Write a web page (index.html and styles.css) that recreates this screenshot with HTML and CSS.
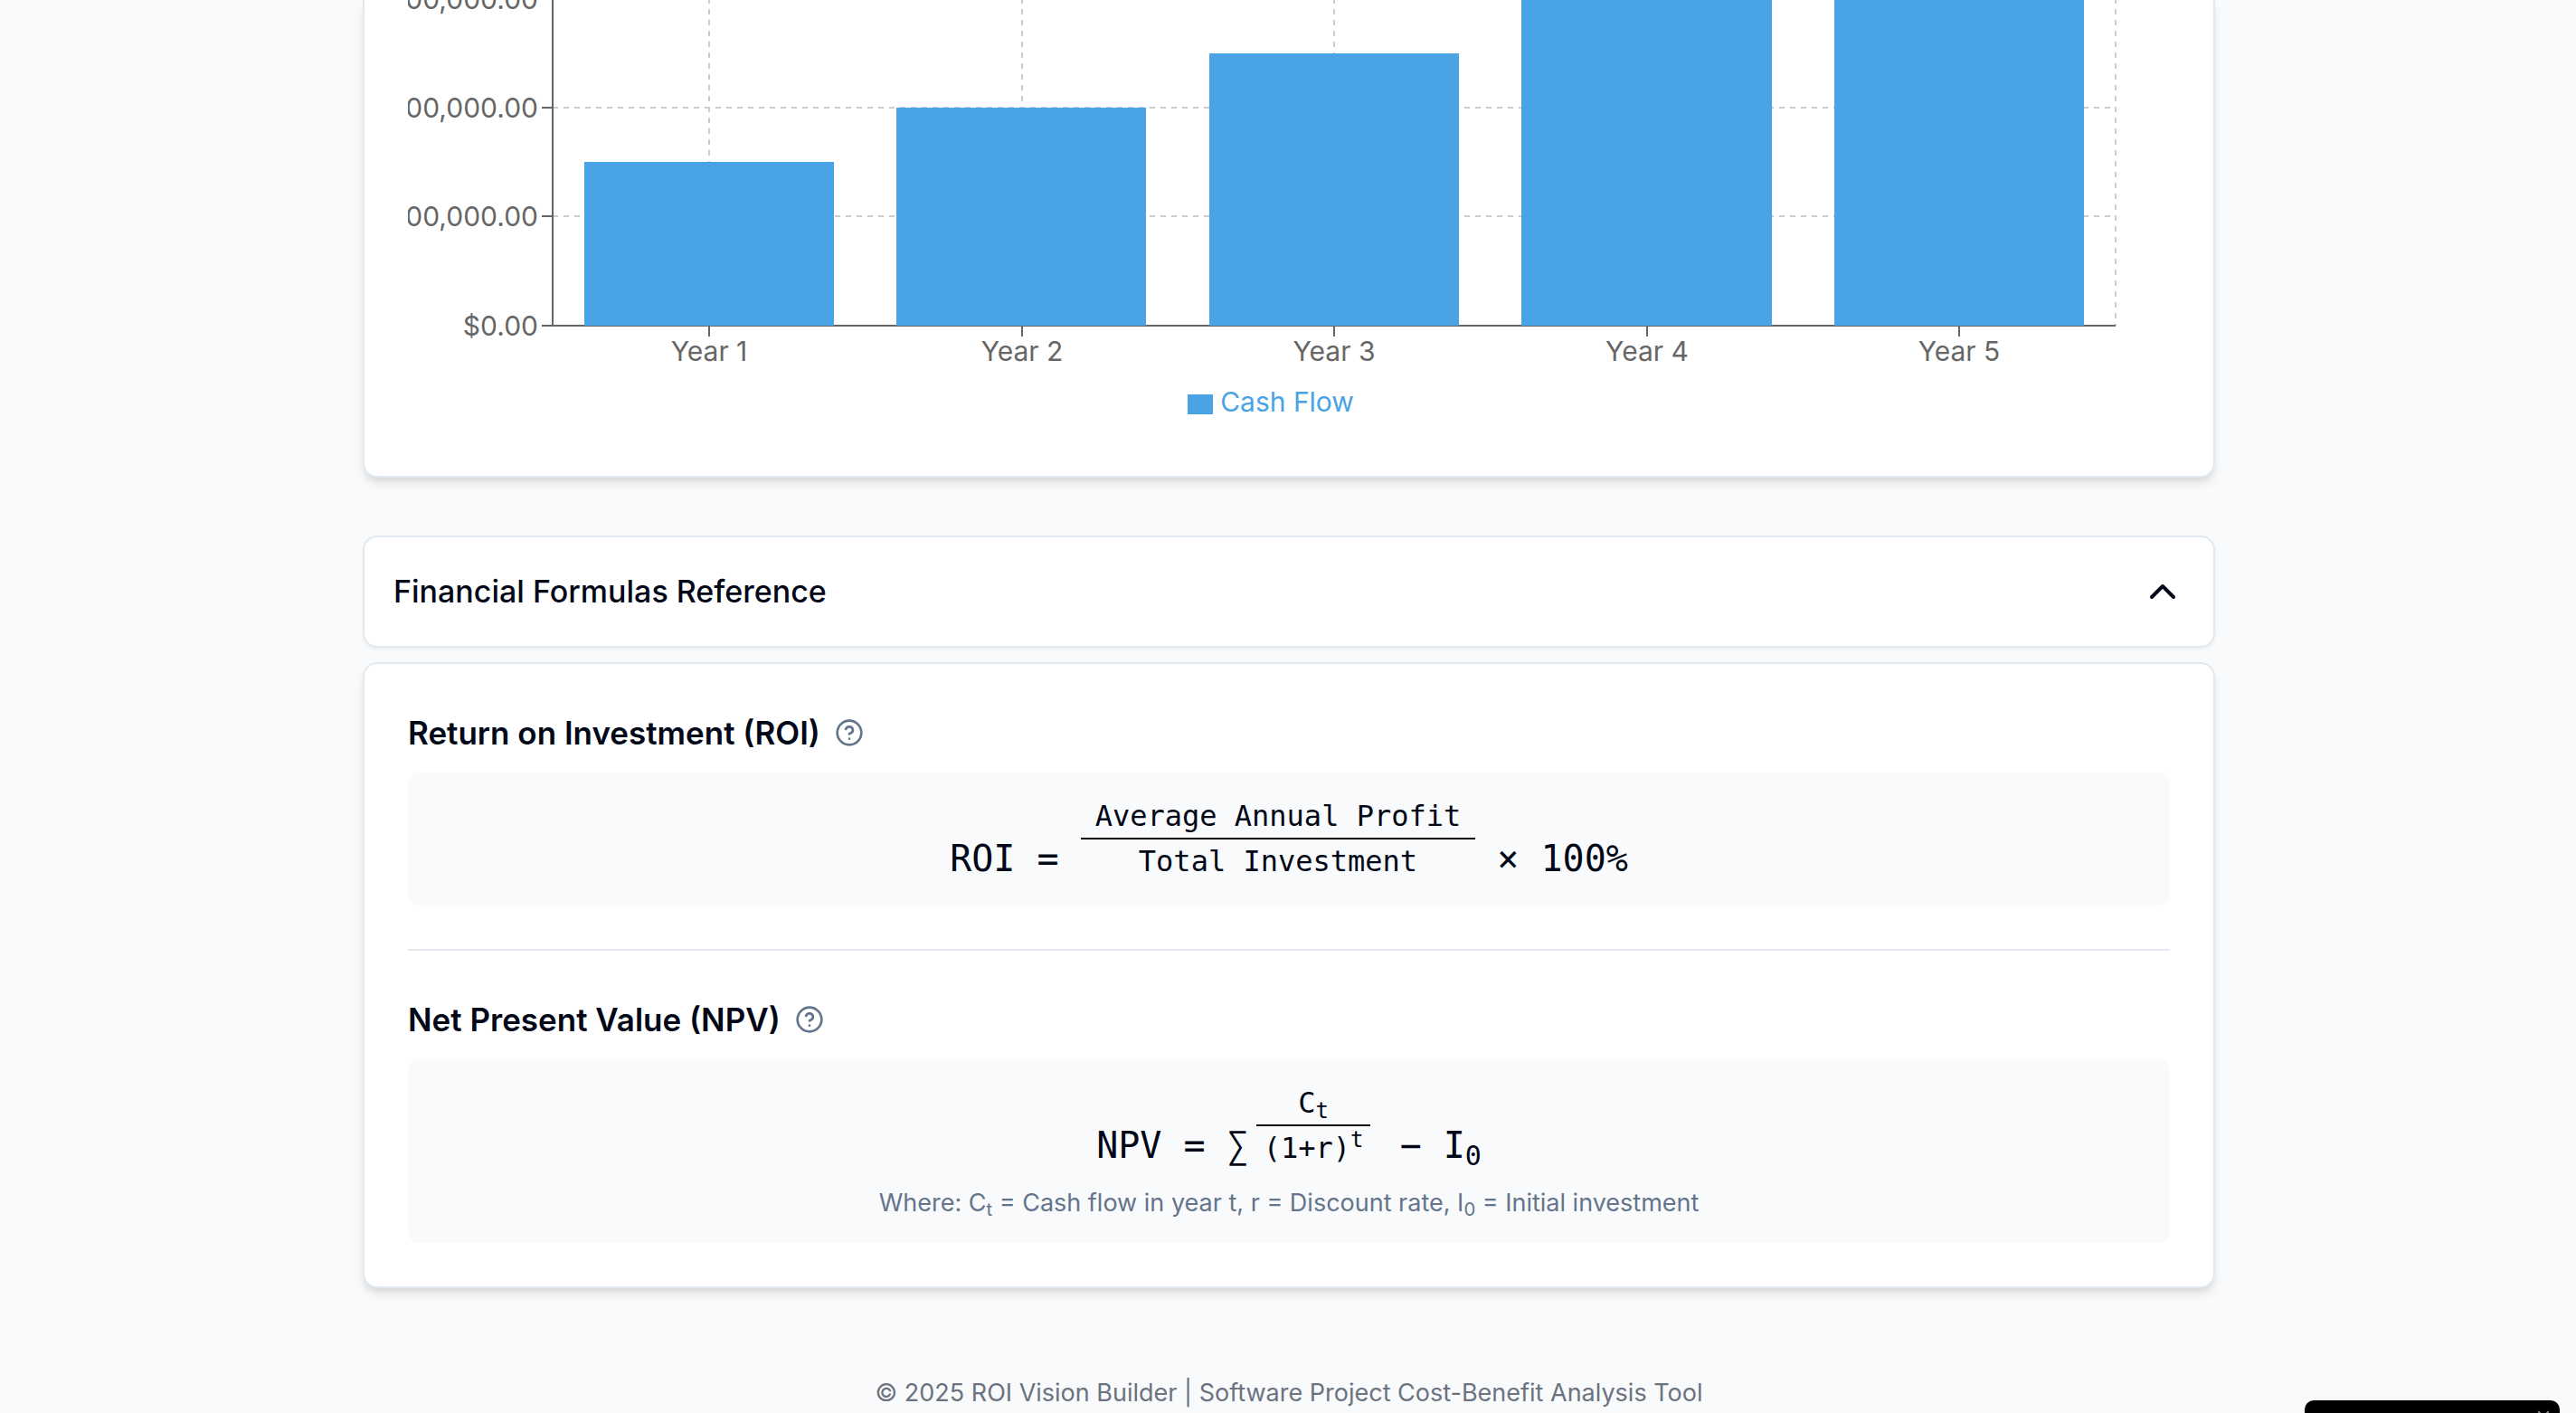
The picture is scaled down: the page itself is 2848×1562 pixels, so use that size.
FILE: index.html
```html
<!DOCTYPE html>
<html lang="en">
<head>
<meta charset="utf-8">
<title>ROI Vision Builder</title>
<link rel="stylesheet" href="styles.css">
</head>
<body>
<main class="page">
  <section class="card chart-card" aria-label="Cash flow by year">
    <svg class="chart" viewBox="0 0 1948 424" role="img" aria-label="Cash flow bar chart">
      <g class="grid">
        <path d="M160 119H1888M160 239H1888"/>
        <path d="M333 -2V360M679 -2V360M1024 -2V360M1370 -2V360M1715 -2V360M1888 -2V360"/>
      </g>
      <g class="axis">
        <path d="M160 0V360M148 360H1888M148 119H160M148 239H160"/>
        <path d="M333 360v12M679 360v12M1024 360v12M1370 360v12M1715 360v12"/>
      </g>
      <g class="bars">
        <rect x="195" y="179" width="276" height="181"/>
        <rect x="540" y="119" width="276" height="241"/>
        <rect x="886" y="59" width="276" height="301"/>
        <rect x="1231" y="0" width="277" height="360"/>
        <rect x="1577" y="0" width="276" height="360"/>
      </g>
      <g class="ticks ticks-y">
        <text x="144" y="10">$300,000.00</text>
        <text x="144" y="130">$200,000.00</text>
        <text x="144" y="250">$100,000.00</text>
        <text x="144" y="371">$0.00</text>
      </g>
      <g class="ticks ticks-x">
        <text x="333" y="399">Year 1</text>
        <text x="679" y="399">Year 2</text>
        <text x="1024" y="399">Year 3</text>
        <text x="1370" y="399">Year 4</text>
        <text x="1715" y="399">Year 5</text>
      </g>
    </svg>
    <div class="legend"><span class="swatch"></span>Cash Flow</div>
  </section>

  <button class="card toggle" type="button" aria-expanded="true" aria-controls="formulas">
    Financial Formulas Reference
    <svg class="chevron" viewBox="0 0 24 24" aria-hidden="true"><path d="m18 15-6-6-6 6"/></svg>
  </button>

  <section class="card formulas" id="formulas">
    <article class="entry">
      <div class="entry-head">
        <h3>Return on Investment (ROI)</h3>
        <button class="help" type="button" aria-label="About ROI"><svg viewBox="0 0 24 24" aria-hidden="true"><circle cx="12" cy="12" r="10"/><path d="M9.090 9a3 3 0 0 1 5.830 1c0 2-3 3-3 3M12 17h.010"/></svg></button>
      </div>
      <div class="formula-box">
        <div class="formula">ROI = <span class="fraction fraction-wide"><span class="top">Average Annual Profit</span><span class="bottom">Total Investment</span></span> × 100%</div>
      </div>
    </article>
    <hr class="rule">
    <article class="entry">
      <div class="entry-head">
        <h3>Net Present Value (NPV)</h3>
        <button class="help" type="button" aria-label="About NPV"><svg viewBox="0 0 24 24" aria-hidden="true"><circle cx="12" cy="12" r="10"/><path d="M9.090 9a3 3 0 0 1 5.830 1c0 2-3 3-3 3M12 17h.010"/></svg></button>
      </div>
      <div class="formula-box">
        <div class="formula">NPV = ∑<span class="fraction fraction-term"><span class="top">C<sub>t</sub></span><span class="bottom">(1+r)<sup>t</sup></span></span> − I<sub>0</sub></div>
        <p class="note">Where: C<sub>t</sub> = Cash flow in year t, r = Discount rate, I<sub>0</sub> = Initial investment</p>
      </div>
    </article>
  </section>
  <footer class="footer">© 2025 ROI Vision Builder | Software Project Cost-Benefit Analysis Tool</footer>
</main>
<aside class="badge" aria-label="Badge"><svg viewBox="0 0 24 24" aria-hidden="true"><path d="M5 5l14 14M19 5L5 19"/></svg></aside>
</body>
</html>
```
FILE: styles.css
```css
* { box-sizing: border-box; }
body {
  margin: 0;
  padding-left: 2px;
  background: #f9fafb;
  color: #020817;
  font-family: Inter, "Liberation Sans", sans-serif;
}
.page {
  width: 100%;
  max-width: 2048px;
  margin: 0 auto;
  display: flex;
  flex-direction: column;
}
.card {
  border: 2px solid #e2e8f0;
  border-radius: 16px;
  background: #fff;
  box-shadow: 0 8px 12px -2px rgb(0 0 0 / 10%), 0 4px 8px -4px rgb(0 0 0 / 10%);
}
.chart-card {
  border-top: 0;
  border-top-left-radius: 0;
  border-top-right-radius: 0;
  padding: 0 48px 62px;
}
.chart { display: block; width: 100%; overflow: hidden; }
.grid path { fill: none; stroke: #ccc; stroke-width: 2; stroke-dasharray: 6 6; }
.axis path { fill: none; stroke: #666; stroke-width: 2; }
.bars rect { fill: #4aa3e4; }
.ticks text { fill: #666; font-size: 30px; }
.ticks-y text { text-anchor: end; }
.ticks-x text { text-anchor: middle; }
.legend {
  display: flex;
  justify-content: center;
  align-items: center;
  gap: 8px;
  height: 40px;
  padding-right: 40px;
  color: #4aa3e4;
  font-size: 30px;
}
.swatch { width: 28px; height: 22px; margin-top: 6px; background: #4aa3e4; }
.toggle {
  display: flex;
  justify-content: space-between;
  align-items: center;
  width: 100%;
  height: 124px;
  margin-top: 64px;
  padding: 0 32px;
  color: inherit;
  font: 500 34px/56px Inter, "Liberation Sans", sans-serif;
  text-align: left;
  box-shadow: 0 2px 4px rgb(0 0 0 / 5%);
}
.chevron {
  width: 48px;
  height: 48px;
  fill: none;
  stroke: currentColor;
  stroke-width: 2;
  stroke-linecap: round;
  stroke-linejoin: round;
}
.formulas { margin-top: 16px; padding: 48px; }
.entry-head { display: flex; align-items: center; gap: 16px; height: 56px; }
h3 { margin: 0; font-size: 35px; line-height: 56px; font-weight: 600; }
.help { width: 32px; height: 32px; padding: 0; border: 0; background: none; color: #64748b; }
.help svg {
  display: block;
  width: 100%;
  height: 100%;
  fill: none;
  stroke: currentColor;
  stroke-width: 2;
  stroke-linecap: round;
  stroke-linejoin: round;
}
.formula-box { margin-top: 16px; padding: 24px; border-radius: 12px; background: #f9fafb; }
.formula { font: 40px/56px "DejaVu Sans Mono", monospace; text-align: center; }
.fraction { display: inline-block; font-size: 32px; line-height: 48px; }
.fraction-wide .top, .fraction-wide .bottom { padding: 0 16px; }
.fraction-term { margin: 0 8px; }
.fraction-term .top, .fraction-term .bottom { padding: 0 8px; }
.top, .bottom { display: block; }
.top { border-bottom: 2px solid #000; }
.rule { width: 100%; height: 2px; margin: 48px 0; border: 0; background: #e2e8f0; }
.note { margin: 16px 0 0; color: #64748b; font-size: 27px; line-height: 40px; text-align: center; }
sub, sup { font-size: 75%; line-height: 0; }
sub { vertical-align: -0.25em; }
sup { vertical-align: 0.5em; }
.footer { padding-top: 96px; color: #6b7280; font-size: 27px; line-height: 40px; text-align: center; }
.badge {
  position: fixed;
  right: 18px;
  bottom: -50px;
  width: 282px;
  height: 64px;
  border-radius: 10px;
  background: #000;
}
.badge svg { position: absolute; top: 8px; right: 8px; width: 20px; fill: none; stroke: #999; stroke-width: 2; }
```
